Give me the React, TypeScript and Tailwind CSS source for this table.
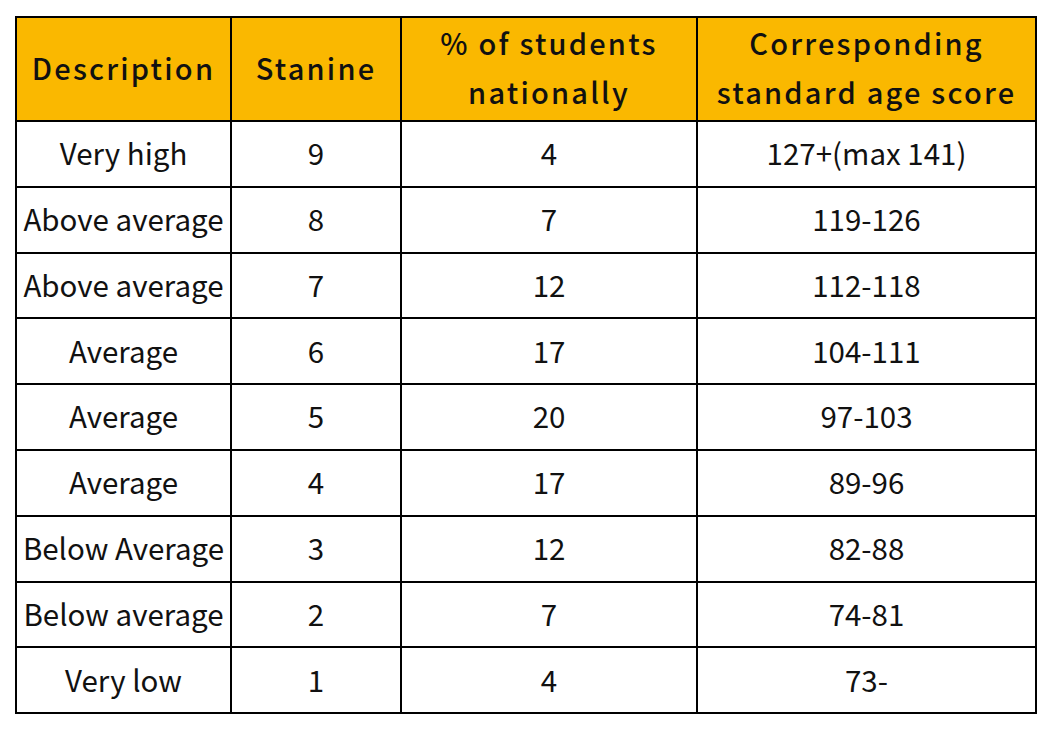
const rows = [
  ["Very high", "9", "4", "127+(max 141)"],
  ["Above average", "8", "7", "119-126"],
  ["Above average", "7", "12", "112-118"],
  ["Average", "6", "17", "104-111"],
  ["Average", "5", "20", "97-103"],
  ["Average", "4", "17", "89-96"],
  ["Below Average", "3", "12", "82-88"],
  ["Below average", "2", "7", "74-81"],
  ["Very low", "1", "4", "73-"],
];

const cell = "border-2 border-black text-center align-middle p-0";

export default function App() {
  return (
    <div className="h-[730px] w-[1050px] bg-white pl-[15px] pt-[16px] text-[#111] [font-family:'Noto_Sans_CJK_SC','Noto_Sans',sans-serif]">
      <table className="w-[1020px] table-fixed border-collapse">
        <colgroup>
          <col className="w-[215px]" />
          <col className="w-[170px]" />
          <col className="w-[296px]" />
          <col className="w-[339px]" />
        </colgroup>
        <thead>
          <tr className="h-[103px] bg-[#fab800] text-[29px] leading-[49px] tracking-[2.2px]">
            <th className={cell + " pb-[4px] font-medium"}>Description</th>
            <th className={cell + " pb-[4px] font-medium"}>Stanine</th>
            <th className={cell + " pb-[4px] font-medium"}>
              % of students
              <br />
              nationally
            </th>
            <th className={cell + " pb-[4px] font-medium"}>
              Corresponding
              <br />
              standard age score
            </th>
          </tr>
        </thead>
        <tbody className="text-[29.5px] font-normal">
          {rows.map((r, i) => (
            <tr key={i} className="h-[65.8px]">
              {r.map((v, j) => (
                <td key={j} className={cell + " pb-[3px]"}>
                  {v}
                </td>
              ))}
            </tr>
          ))}
        </tbody>
      </table>
    </div>
  );
}
